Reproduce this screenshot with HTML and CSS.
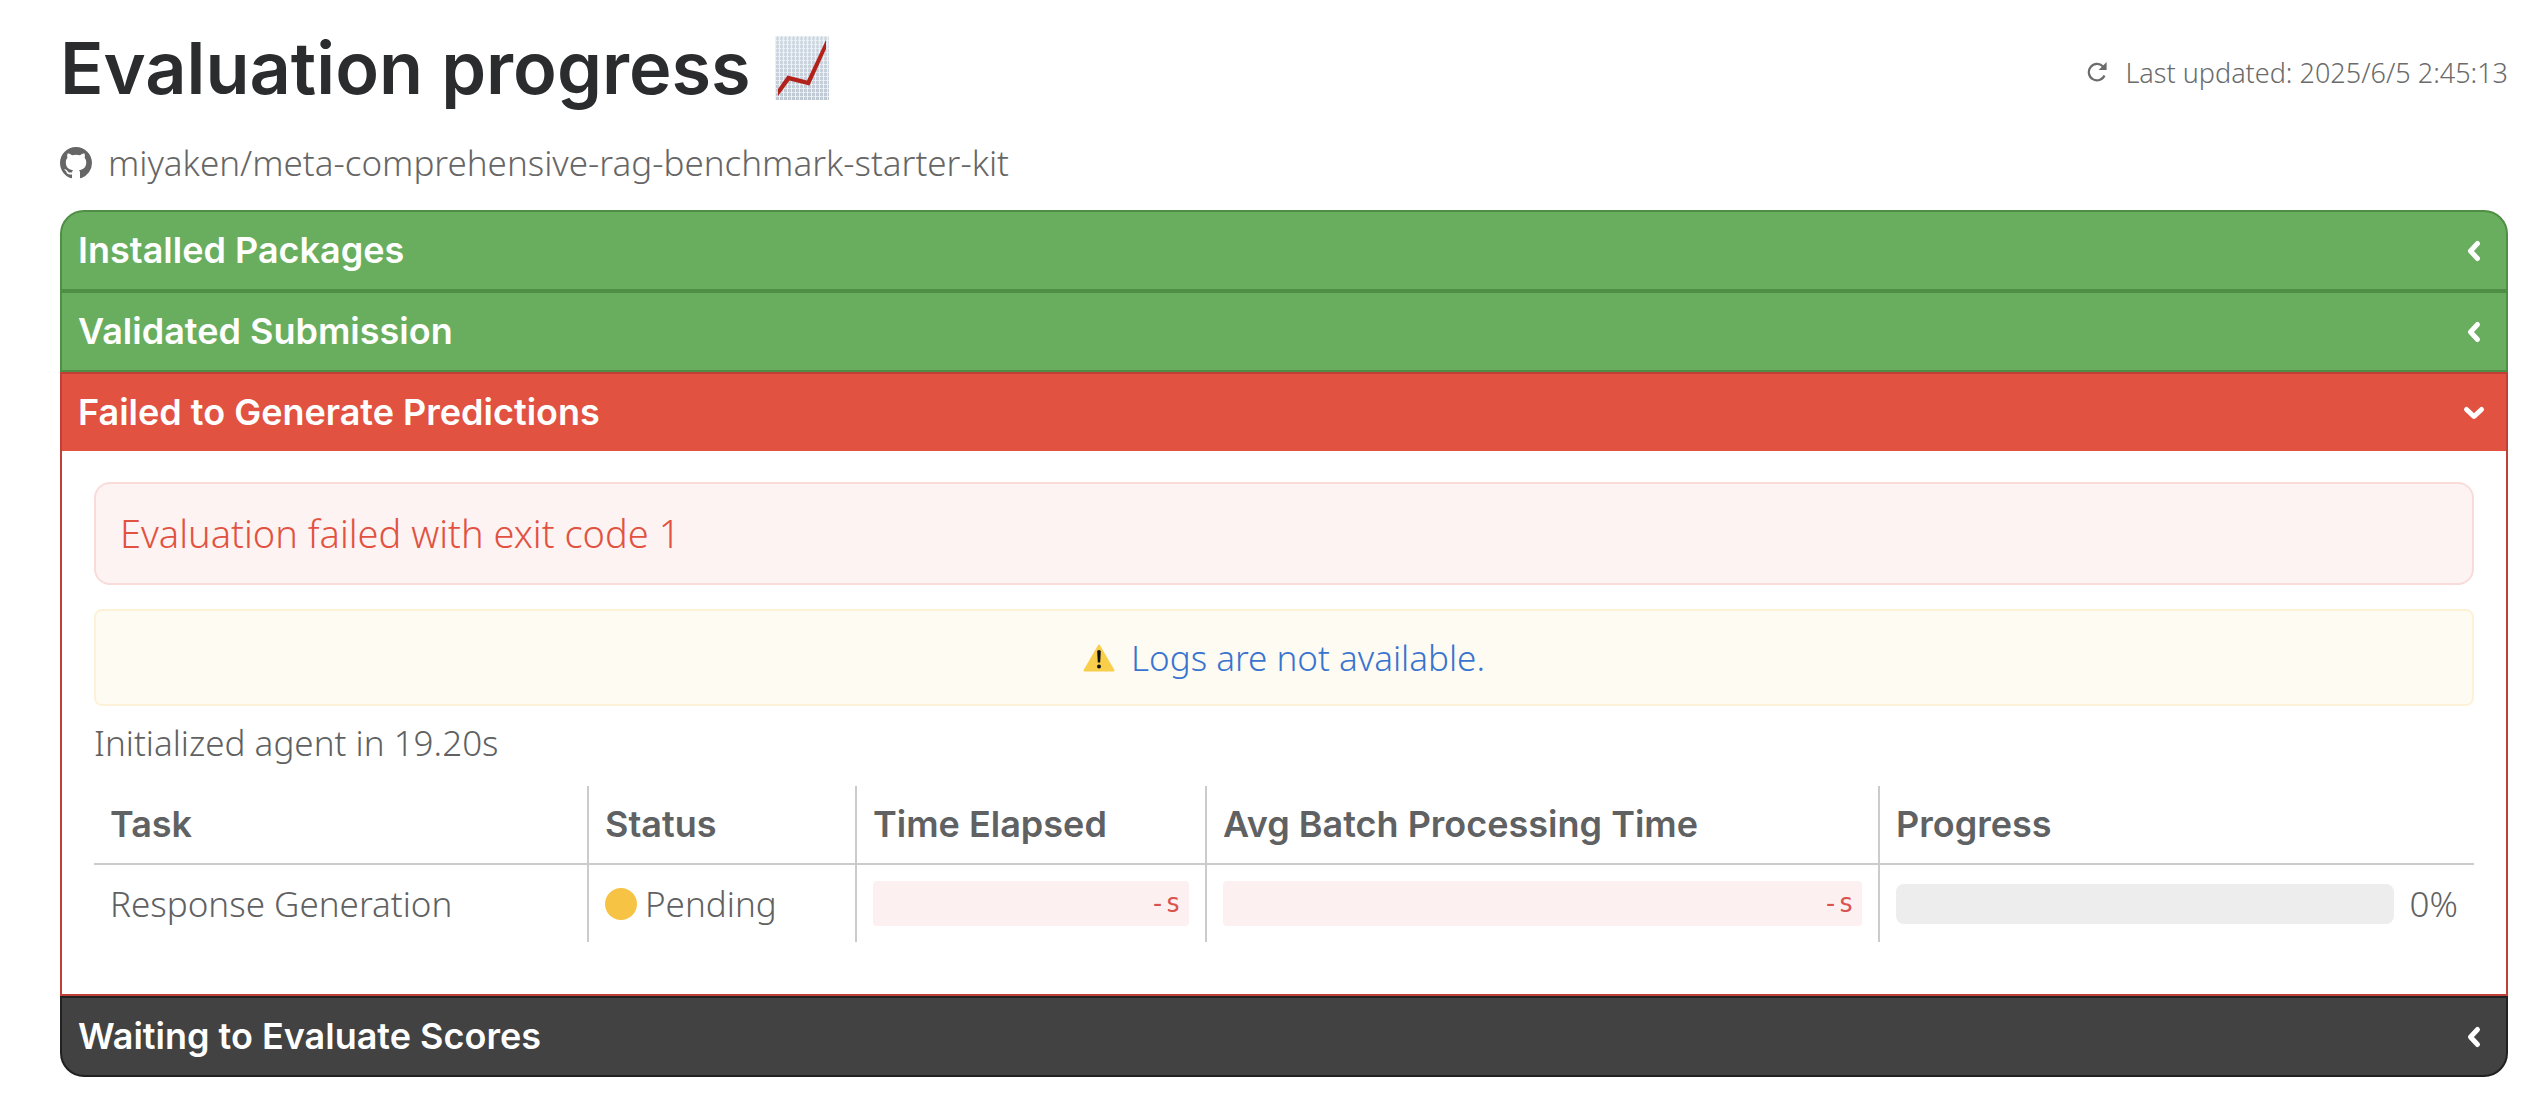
FILE: index.html
```html
<!DOCTYPE html>
<html lang="en">
<head>
  <meta charset="utf-8">
  <meta name="viewport" content="width=device-width, initial-scale=1">
  <title>Evaluation progress</title>
  <link rel="stylesheet" href="styles.css">
</head>
<body>

<header class="page-header">
  <h1 class="title">
    Evaluation progress
    <svg class="chart-icon" viewBox="0 0 54 64" aria-hidden="true">
      <defs>
        <linearGradient id="paper" x1="0" y1="0" x2="0" y2="1">
          <stop offset="0" stop-color="#d6dee6"/>
          <stop offset="1" stop-color="#bcc6d1"/>
        </linearGradient>
        <pattern id="grid" width="4" height="4" patternUnits="userSpaceOnUse">
          <path d="M0 .5h4M.5 0v4" stroke="#eaf1f7" stroke-width="1"/>
          <path d="M2.500 0v4" stroke="#bdd3e8" stroke-width=".6"/>
        </pattern>
      </defs>
      <rect width="54" height="64" fill="url(#paper)"/>
      <rect width="54" height="64" fill="url(#grid)"/>
      <path d="M3 53 12.500 39.500 32 44.500 51 4v9L34.500 49.500 14.500 44.500 3 60z" fill="#b3221a"/>
    </svg>
  </h1>
  <div class="updated">
    <svg class="refresh-icon" viewBox="0 0 20 20" aria-hidden="true">
      <path d="M17.500 13.500A8.200 8.200 0 1 1 16 4.500" fill="none" stroke="currentColor" stroke-width="2.200"/>
      <path d="M19.600 0v8h-8z" fill="currentColor"/>
    </svg>
    <span>Last updated: 2025/6/5 2:45:13</span>
  </div>
</header>

<a class="repo" href="#">
  <svg class="github-icon" viewBox="0 0 16 16" aria-hidden="true">
    <path fill="currentColor" d="M8 0C3.580 0 0 3.580 0 8c0 3.540 2.290 6.530 5.470 7.590.4.070.55-.17.55-.38 0-.19-.01-.82-.01-1.490-2.010.37-2.530-.49-2.690-.94-.09-.23-.48-.94-.82-1.130-.28-.15-.68-.52-.01-.53.63-.01 1.080.58 1.230.82.72 1.210 1.870.87 2.330.66.07-.52.28-.87.51-1.070-1.780-.2-3.640-.89-3.640-3.950 0-.87.31-1.590.82-2.150-.08-.2-.36-1.020.08-2.120 0 0 .67-.21 2.200.82.64-.18 1.320-.27 2-.27s1.360.09 2 .27c1.530-1.040 2.200-.82 2.200-.82.44 1.100.16 1.920.08 2.120.51.56.82 1.270.82 2.150 0 3.070-1.870 3.750-3.650 3.950.29.25.54.73.54 1.480 0 1.070-.01 1.930-.01 2.200 0 .21.15.46.55.38A8.010 8.010 0 0 0 16 8c0-4.420-3.580-8-8-8z"/>
  </svg>
  <span>miyaken/meta-comprehensive-rag-benchmark-starter-kit</span>
</a>

<main class="steps">
  <section class="step success">
    <button class="step-head" type="button" aria-expanded="false">
      <span>Installed Packages</span>
      <svg class="chevron" viewBox="0 0 24 24" aria-hidden="true"><path d="M15.500 4.500 8.500 12l7 7.500"/></svg>
    </button>
  </section>

  <section class="step success">
    <button class="step-head" type="button" aria-expanded="false">
      <span>Validated Submission</span>
      <svg class="chevron" viewBox="0 0 24 24" aria-hidden="true"><path d="M15.500 4.500 8.500 12l7 7.500"/></svg>
    </button>
  </section>

  <section class="step failed">
    <button class="step-head" type="button" aria-expanded="true">
      <span>Failed to Generate Predictions</span>
      <svg class="chevron" viewBox="0 0 24 24" aria-hidden="true"><path d="M4.500 8.500 12 15.500l7.500-7"/></svg>
    </button>
    <div class="step-body">
      <div class="error">Evaluation failed with exit code 1</div>
      <div class="warning">
        <svg class="warning-icon" viewBox="0 0 32 28" aria-hidden="true">
          <path d="M16 1.500 30.500 26.500h-29z" fill="#f8ce4b" stroke="#f8ce4b" stroke-width="2" stroke-linejoin="round"/>
          <path d="M14.200 7.500q0-1.500 1.800-1.500t1.800 1.500l-.6 11h-2.400z" fill="#111"/>
          <circle cx="16" cy="22.500" r="2" fill="#111"/>
        </svg>
        <span>Logs are not available.</span>
      </div>
      <p class="init">Initialized agent in 19.20s</p>
      <table class="tasks">
        <thead>
          <tr>
            <th class="col-task" scope="col">Task</th>
            <th class="col-status" scope="col">Status</th>
            <th class="col-elapsed" scope="col">Time Elapsed</th>
            <th class="col-batch" scope="col">Avg Batch Processing Time</th>
            <th scope="col">Progress</th>
          </tr>
        </thead>
        <tbody>
          <tr>
            <td>Response Generation</td>
            <td><div class="status"><span class="dot"></span>Pending</div></td>
            <td><code class="time">-s</code></td>
            <td><code class="time">-s</code></td>
            <td>
              <div class="progress">
                <progress class="bar" max="100" value="0" aria-label="Response Generation progress"></progress>
                <span>0%</span>
              </div>
            </td>
          </tr>
        </tbody>
      </table>
    </div>
  </section>

  <section class="step waiting">
    <button class="step-head" type="button" aria-expanded="false">
      <span>Waiting to Evaluate Scores</span>
      <svg class="chevron" viewBox="0 0 24 24" aria-hidden="true"><path d="M15.500 4.500 8.500 12l7 7.500"/></svg>
    </button>
  </section>
</main>

</body>
</html>
```
FILE: styles.css
```css
* {
  box-sizing: border-box;
}

body {
  margin: 0;
  padding: 20px 38px 32px 60px;
  background: #fff;
  color: #606162;
  font-family: "Noto Sans", sans-serif;
  font-size: 35px;
  font-weight: 300;
  line-height: 49px;
}

/* header */
.page-header {
  display: flex;
  align-items: center;
  justify-content: space-between;
  gap: 24px;
  margin-bottom: 22px;
}

.title {
  display: flex;
  align-items: center;
  gap: 24px;
  margin: 0;
  color: #2b2c2e;
  font-family: Inter, sans-serif;
  font-size: 72px;
  font-weight: 600;
  line-height: 96px;
}

.chart-icon {
  width: 54px;
  height: 64px;
}

.updated {
  display: flex;
  align-items: center;
  gap: 18px;
  padding-top: 8px;
  color: #6b6b6b;
  font-size: 27px;
}

.refresh-icon {
  width: 20px;
  height: 20px;
}

.repo {
  display: flex;
  align-items: center;
  gap: 16px;
  margin-bottom: 23px;
  color: #666;
  text-decoration: none;
}

.github-icon {
  flex: none;
  width: 32px;
  height: 32px;
}

/* accordion */
.step {
  border: 2px solid;
}

.step:first-child {
  border-radius: 24px 24px 0 0;
}

.step:last-child {
  border-radius: 0 0 24px 24px;
}

.success {
  border-color: #4f8f45;
  background: #69ae5e;
}

.failed {
  border-color: #c03f37;
  background: #fff;
}

.failed .step-head {
  background: #e15241;
}

.waiting {
  border-color: #202122;
  background: #424242;
}

.step-head {
  display: flex;
  align-items: center;
  justify-content: space-between;
  width: 100%;
  padding: 14px 20px 14px 16px;
  border: 0;
  background: none;
  color: #fff;
  font: 600 36px/49px Inter, sans-serif;
  text-align: left;
  cursor: pointer;
}

.chevron {
  flex: none;
  width: 24px;
  height: 24px;
  fill: none;
  stroke: #fff;
  stroke-width: 5px;
  stroke-linecap: round;
  stroke-linejoin: round;
}

.step-body {
  padding: 31px 32px 52px;
}

.error {
  margin-bottom: 24px;
  padding: 24px;
  border: 2px solid #f9dcda;
  border-radius: 16px;
  background: #fdf3f2;
  color: #e15241;
  font-size: 38px;
  line-height: 51px;
}

.warning {
  display: flex;
  align-items: center;
  justify-content: center;
  gap: 16px;
  margin-bottom: 12px;
  padding: 22px;
  border: 2px solid #fdf2d8;
  border-radius: 8px;
  background: #fefbf3;
  color: #3874cf;
}

.warning-icon {
  width: 32px;
  height: 28px;
}

.init {
  margin: 0 0 19px;
}

/* tasks table */
.tasks {
  width: 100%;
  border-spacing: 0;
}

.tasks th,
.tasks td {
  padding: 14px 16px;
  border-left: 2px solid #cbcbcb;
  text-align: left;
}

.tasks th {
  border-bottom: 2px solid #cbcbcb;
  font-family: Inter, sans-serif;
  font-size: 36px;
  font-weight: 600;
}

.tasks th:first-child,
.tasks td:first-child {
  border-left: 0;
}

.col-task {
  width: 493px;
}

.col-status {
  width: 268px;
}

.col-elapsed {
  width: 350px;
}

.col-batch {
  width: 673px;
}

.status {
  display: flex;
  align-items: center;
  gap: 8px;
}

.dot {
  width: 32px;
  height: 32px;
  border-radius: 50%;
  background: #f6c344;
}

.time {
  display: block;
  padding: 0 8px;
  border-radius: 4px;
  background: #fcf1f0;
  color: #d9534f;
  font: 26px/45px "DejaVu Sans Mono", monospace;
  text-align: right;
}

.progress {
  display: flex;
  align-items: center;
  gap: 16px;
}

.bar {
  flex: 1;
  min-width: 0;
  height: 40px;
  border: 0;
  border-radius: 8px;
  background: #ededed;
  overflow: hidden;
  appearance: none;
}

.bar::-webkit-progress-bar {
  background: #ededed;
}

.bar::-webkit-progress-value {
  background: #69ae5e;
}
```
